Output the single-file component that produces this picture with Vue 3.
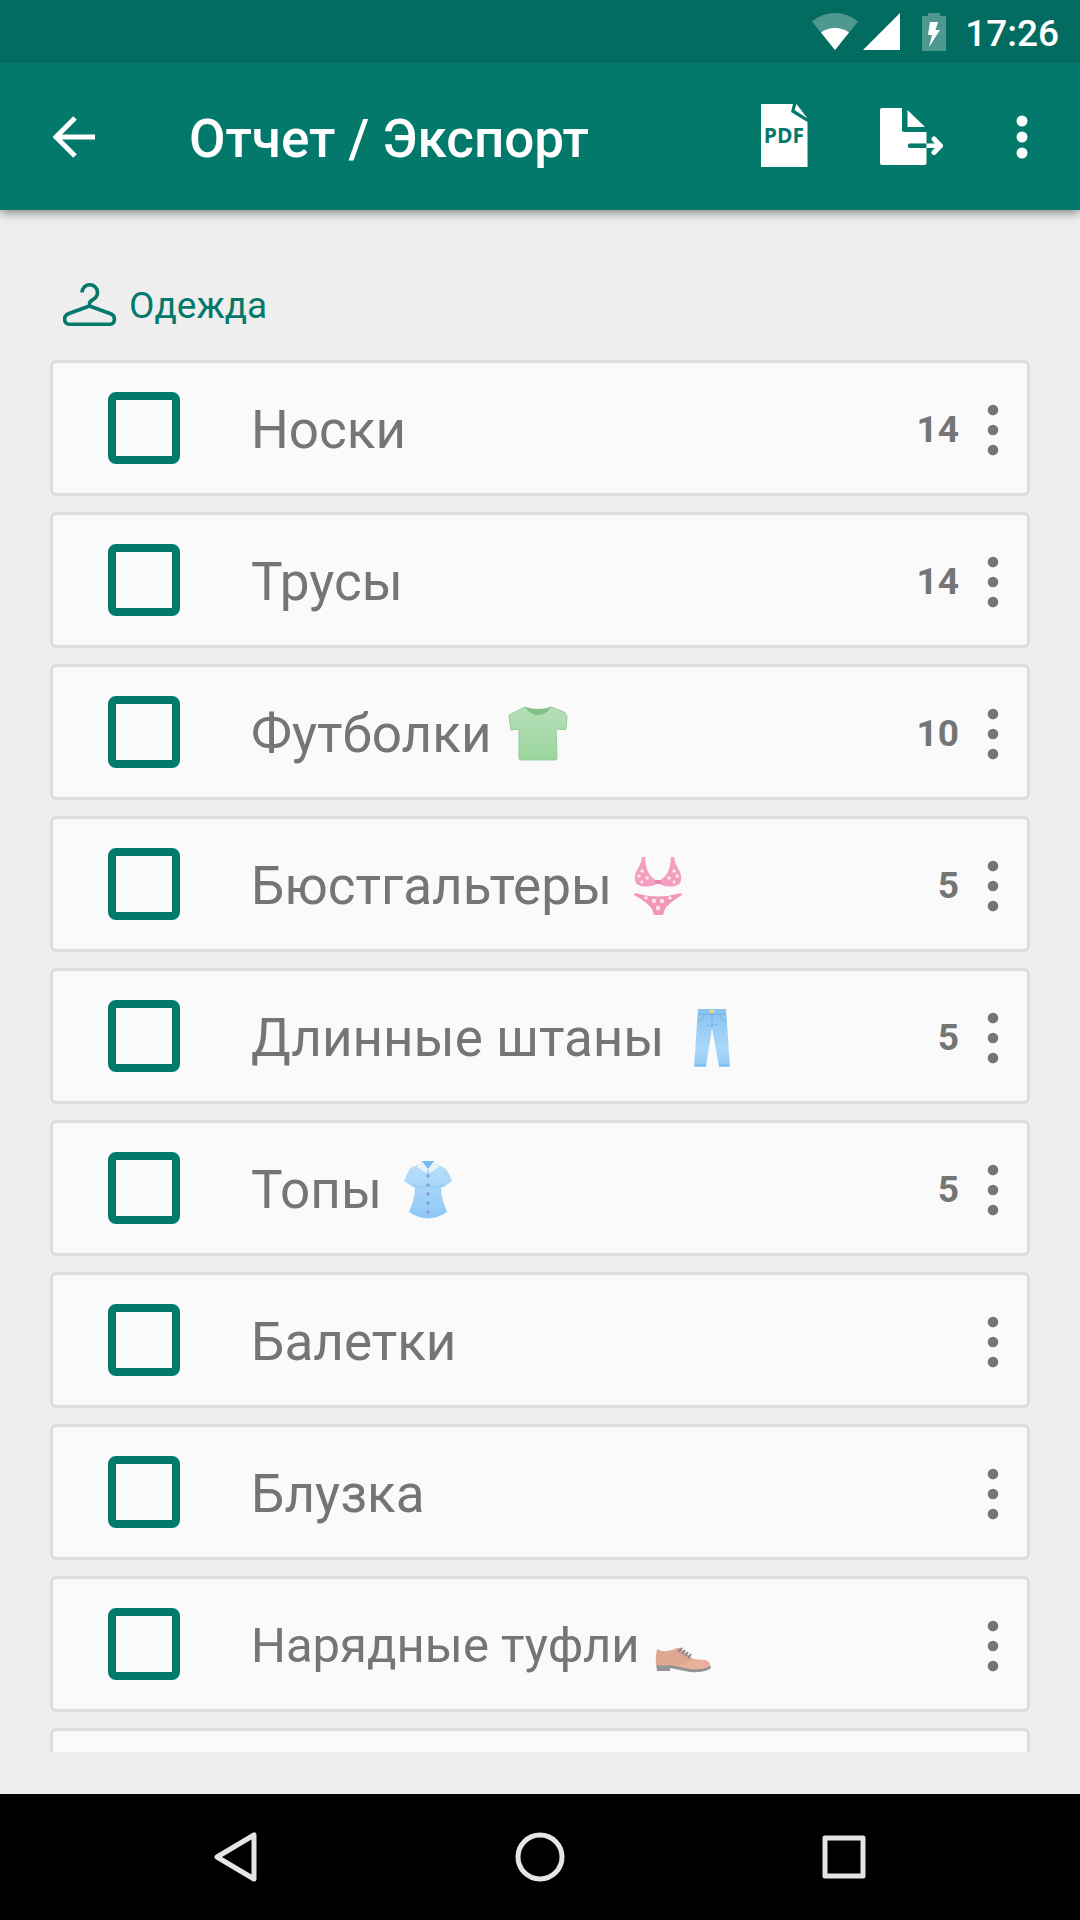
<script setup>
import { ref } from "vue";

const items = ref([
  { id: 1, name: "Носки", count: 14, icon: "", checked: false },
  { id: 2, name: "Трусы", count: 14, icon: "", checked: false },
  { id: 3, name: "Футболки", count: 10, icon: "tshirt", checked: false },
  { id: 4, name: "Бюстгальтеры", count: 5, icon: "bikini", checked: false },
  { id: 5, name: "Длинные штаны", count: 5, icon: "jeans", checked: false },
  { id: 6, name: "Топы", count: 5, icon: "blouse", checked: false },
  { id: 7, name: "Балетки", count: null, icon: "", checked: false },
  { id: 8, name: "Блузка", count: null, icon: "", checked: false },
  { id: 9, name: "Нарядные туфли", count: null, icon: "shoe", checked: false },
  { id: 10, name: "", count: null, icon: "", checked: false },
]);
</script>

<template>
  <div class="screen">
    <div class="status">
      <svg class="wifi" width="46" height="37" viewBox="0 0 46 37">
        <path d="M23 37 0 8.500Q10 0 23 0T46 8.500Z" fill="#fff" opacity=".3" />
        <path d="M23 37 9 19.500Q15 15 23 15T37 19.500Z" fill="#fff" />
      </svg>
      <svg class="signal" width="37" height="37" viewBox="0 0 37 37">
        <path d="M0 37 37 0V37Z" fill="#fff" />
      </svg>
      <svg class="battery" width="24" height="38" viewBox="0 0 24 38">
        <path d="M6 0H18V3H24V38H0V3H6Z" fill="#fff" opacity=".3" />
        <path d="M8 9H16L13.500 17H18L7 34 10 22H6Z" fill="#fff" />
      </svg>
      <span class="time">17:26</span>
    </div>

    <header class="bar">
      <button type="button" class="back">
        <svg width="42" height="42" viewBox="0 0 42 42" fill="none" stroke="#fff" stroke-width="5">
          <path d="M42 21H4M22 2 3 21 22 40" />
        </svg>
      </button>
      <h1>Отчет / Экспорт</h1>
      <button type="button" class="pdf">
        <svg width="47" height="65" viewBox="0 0 47 65">
          <path d="M0 0H32L30 8 46.500 18V63H0Z" fill="#fff" />
          <path d="M35.500 0 46.500 14.500 33.500 6Z" fill="#fff" />
          <text x="23" y="38.500" text-anchor="middle">PDF</text>
        </svg>
      </button>
      <button type="button" class="export">
        <svg width="63" height="57" viewBox="0 0 63 57">
          <path
            d="M2 0H22V22Q22 24 24 24H46.500V55Q46.500 57 44.500 57H2Q0 57 0 55V2Q0 0 2 0Z"
            fill="#fff"
          />
          <path d="M27.500 2V19H45Z" fill="#fff" />
          <path d="M30 37.700H46.500" stroke="#03796c" stroke-width="4.500" />
          <circle cx="30" cy="37.700" r="2.200" fill="#03796c" />
          <path d="M46.500 37.700H60" stroke="#fff" stroke-width="4.500" />
          <path
            d="M54 31 60.500 37.700 54 44.400"
            fill="none"
            stroke="#fff"
            stroke-width="5"
            stroke-linecap="round"
            stroke-linejoin="round"
          />
        </svg>
      </button>
      <button type="button" class="more">
        <svg width="12" height="44" viewBox="0 0 12 44" fill="#fff">
          <circle cx="6" cy="6" r="5.500" />
          <circle cx="6" cy="22" r="5.500" />
          <circle cx="6" cy="38" r="5.500" />
        </svg>
      </button>
    </header>

    <main>
      <h2>
        <svg width="54" height="44" viewBox="0 0 54 44" fill="none" stroke="#03796c" stroke-width="3.600">
          <path
            d="M19 9.500A7.700 7.700 0 0 1 34.500 9.500C34.500 13.500 32 15.500 29.500 16.800 27.500 17.800 26.500 19 26.500 21V23"
          />
          <path
            d="M26.500 23 6 30.500C-.5 33 .5 41.300 7 41.300H46C52.500 41.300 53.500 33 47 30.500Z"
            stroke-linejoin="round"
          />
        </svg>
        <span>Одежда</span>
      </h2>

      <ul>
        <li v-for="item in items" :key="item.id" class="card">
          <label :class="{ compact: item.name.length > 13 }">
            <input type="checkbox" v-model="item.checked" />
            <span class="name">{{ item.name }}</span>
            <svg v-if="item.icon === 'tshirt'" class="emoji" viewBox="0 0 62 62">
              <defs>
                <linearGradient id="green" x1="0" y1="0" x2="0" y2="1">
                  <stop offset="0" stop-color="#b6dfb8" />
                  <stop offset="1" stop-color="#9ad49d" />
                </linearGradient>
              </defs>
              <path
                d="M18 4Q31 12 44 4L57 9Q60 11 60 14L59 26Q58 27 49 26L50 55Q50 57 48 57H14Q12 57 12 55V26L4 27Q2 16 2 12Z"
                fill="url(#green)"
                stroke="#92cd97"
                stroke-width="1"
              />
              <path d="M18 4Q31 8 44 4 39 12 31 12T18 4Z" fill="#82c086" />
            </svg>
            <svg v-else-if="item.icon === 'bikini'" class="emoji" viewBox="0 0 62 62">
              <path
                d="M15 2H18Q19 22 31 26 43 22 44 2H47Q48 9 53 17 57 29 48 31 38 33 31 28 24 33 14 31 5 29 9 17 14 9 15 2Z"
                fill="#f3a0c0"
              />
              <path d="M28 25H34V29H28Z" fill="#e984aa" />
              <path
                d="M8 38Q31 45 54 38L55 40Q43 47 38 54L36 60H27L25 54Q20 47 7 40Z"
                fill="#f397b7"
              />
              <g fill="#fde6ee">
                <circle cx="15" cy="16" r="1.800" />
                <circle cx="12" cy="21" r="1.800" />
                <circle cx="20" cy="23" r="1.800" />
                <circle cx="15" cy="27" r="1.500" />
                <circle cx="47" cy="16" r="1.800" />
                <circle cx="50" cy="21" r="1.800" />
                <circle cx="42" cy="23" r="1.800" />
                <circle cx="47" cy="27" r="1.500" />
                <circle cx="27" cy="46" r="2.200" />
                <circle cx="35" cy="46" r="2.200" />
                <circle cx="19" cy="43" r="1.800" />
                <circle cx="43" cy="43" r="1.800" />
                <circle cx="31" cy="53" r="2.200" />
              </g>
            </svg>
            <svg v-else-if="item.icon === 'jeans'" class="emoji" viewBox="0 0 62 62">
              <defs>
                <linearGradient id="denim" x1="0" y1="0" x2="0" y2="1">
                  <stop offset="0" stop-color="#89c4f0" />
                  <stop offset=".7" stop-color="#aad8fa" />
                  <stop offset="1" stop-color="#90caf5" />
                </linearGradient>
              </defs>
              <path d="M18 2H46L50 60H39L32 21 26 60H14Z" fill="url(#denim)" />
              <path
                d="M18 7H46M32 7V20M18 14Q23 14 24 8M46 14Q41 14 40 8M27 18Q32 20 37 17M15 58H26M39 58H49"
                fill="none"
                stroke="#74b3e3"
                stroke-width="1"
              />
              <path d="M30 3H34V6H30Z" fill="#f5dd78" />
            </svg>
            <svg v-else-if="item.icon === 'blouse'" class="emoji" viewBox="0 0 62 62">
              <defs>
                <linearGradient id="sky" x1="0" y1="0" x2="0" y2="1">
                  <stop offset="0" stop-color="#b9dffa" />
                  <stop offset="1" stop-color="#8ec8f6" />
                </linearGradient>
              </defs>
              <path
                d="M23 5 13 9Q10 15 7 22L16 28 18 26Q18 34 16 42L12 53Q31 66 50 53L46 42Q44 34 44 26L47 28 55 22Q52 13 48 9L39 5Z"
                fill="url(#sky)"
              />
              <path d="M16 26Q24 31 31 26 38 31 46 26" fill="none" stroke="#9acdf4" stroke-width="3" />
              <path d="M23 2H39L31 12Z" fill="#74b9ef" />
              <path d="M24 1 31 10 29 14 20 8ZM38 1 31 10 33 14 42 8Z" fill="#eaf3f6" />
              <g fill="#8d96d4">
                <circle cx="31" cy="17" r="1.700" />
                <circle cx="31" cy="26" r="1.700" />
                <circle cx="31" cy="35" r="1.700" />
                <circle cx="31" cy="44" r="1.700" />
                <circle cx="31" cy="53" r="1.700" />
              </g>
            </svg>
            <svg v-else-if="item.icon === 'shoe'" class="emoji" viewBox="0 0 62 62">
              <path d="M4 48 5 56H18V53L38 57Q50 58 58 54L59 51Z" fill="#929394" />
              <path
                d="M5 34Q14 39 25 33L28 33 41 44 53 45Q58 46 58 51 51 55 39 54L18 50Q8 51 4 50 3 42 5 34Z"
                fill="#dfa691"
              />
              <path d="M20 50Q32 52 39 45L53 45Q58 47 58 51 50 55 39 54Z" fill="#e7b19e" />
              <path
                d="M26 37 30 33M30 39 33 35M33 41 36 37M36 43 39 39"
                stroke="#858789"
                stroke-width="2"
              />
            </svg>
          </label>
          <span v-if="item.count" class="count">{{ item.count }}</span>
          <button type="button" class="menu">
            <svg width="12" height="52" viewBox="0 0 12 52" fill="#757575">
              <circle cx="6" cy="6" r="5.300" />
              <circle cx="6" cy="26" r="5.300" />
              <circle cx="6" cy="46" r="5.300" />
            </svg>
          </button>
        </li>
      </ul>
    </main>

    <nav>
      <button type="button">
        <svg width="50" height="50" viewBox="0 0 50 50">
          <path d="M43 3V47L6 25Z" />
        </svg>
      </button>
      <button type="button">
        <svg width="50" height="50" viewBox="0 0 50 50">
          <circle cx="25" cy="25" r="22" />
        </svg>
      </button>
      <button type="button">
        <svg width="50" height="50" viewBox="0 0 50 50">
          <rect x="6" y="6" width="38" height="38" />
        </svg>
      </button>
    </nav>
  </div>
</template>

<style>
body {
  margin: 0;
  background: #eee;
}
</style>

<style scoped>
* {
  box-sizing: border-box;
}
.screen {
  display: flex;
  flex-direction: column;
  height: 100vh;
  overflow: hidden;
  background: #eee;
  font-family: Roboto, sans-serif;
}
svg {
  display: block;
  flex: none;
}
button {
  display: flex;
  align-items: center;
  justify-content: center;
  padding: 0;
  border: 0;
  background: none;
}

.status {
  display: flex;
  flex: none;
  align-items: center;
  justify-content: flex-end;
  height: 63px;
  padding-right: 21px;
  background: #036c60;
  color: #fff;
  z-index: 2;
}
.signal {
  margin-left: 5px;
}
.battery {
  margin: 0 19px 0 22px;
}
.time {
  padding-top: 4px;
  font-size: 37px;
  font-weight: 500;
  line-height: 44px;
}

.bar {
  display: flex;
  flex: none;
  align-items: center;
  height: 147px;
  padding: 0 28px 0 53px;
  background: #03796c;
  color: #fff;
  box-shadow: 0 2px 10px rgba(0, 0, 0, 0.5);
  z-index: 1;
}
.back {
  width: 42px;
  height: 80px;
}
h1 {
  flex: 1;
  margin: 0 0 0 94px;
  padding-top: 4px;
  font-size: 53px;
  font-weight: 500;
  line-height: 62px;
  white-space: nowrap;
}
.pdf text {
  font-family: "Open Sans", sans-serif;
  font-size: 21px;
  font-weight: 700;
  fill: #03796c;
}
.export {
  margin: 0 49px 0 72px;
}
.more {
  width: 60px;
  height: 80px;
}

main {
  flex: 1;
  min-height: 0;
  margin-bottom: 42px;
  padding: 0 50px;
  overflow: hidden;
}
h2 {
  display: flex;
  align-items: center;
  gap: 12px;
  height: 150px;
  margin: 0;
  padding: 40px 0 0 13px;
  color: #03796c;
  font-size: 37px;
  font-weight: 400;
}
ul {
  display: flex;
  flex-direction: column;
  gap: 16px;
  margin: 0;
  padding: 0;
  list-style: none;
}
.card {
  display: flex;
  flex: none;
  align-items: center;
  height: 136px;
  padding: 4px 0 0 55px;
  border: 3px solid #ddd;
  border-radius: 6px;
  background: #fafafa;
  color: #757575;
}
label {
  display: flex;
  flex: 1;
  align-items: center;
}
input {
  appearance: none;
  flex: none;
  width: 72px;
  height: 72px;
  margin: 0 71px 4px 0;
  border: 8px solid #03796c;
  border-radius: 8px;
}
input:checked {
  background: #03796c;
}
.name {
  font-size: 53px;
  line-height: 62px;
  white-space: nowrap;
}
.emoji {
  width: 62px;
  height: 62px;
  margin-left: 15px;
}
.compact .name {
  font-size: 49px;
}
.compact .emoji {
  margin-left: 12px;
}
.count {
  font-size: 37px;
  font-weight: 700;
  line-height: 44px;
}
.menu {
  width: 68px;
  height: 100px;
}

nav {
  display: flex;
  flex: none;
  justify-content: center;
  gap: 2px;
  height: 126px;
  background: #000;
}
nav button {
  width: 28%;
}
nav svg {
  fill: none;
  stroke: #e5e5e5;
  stroke-width: 5px;
  stroke-linejoin: round;
}
</style>
